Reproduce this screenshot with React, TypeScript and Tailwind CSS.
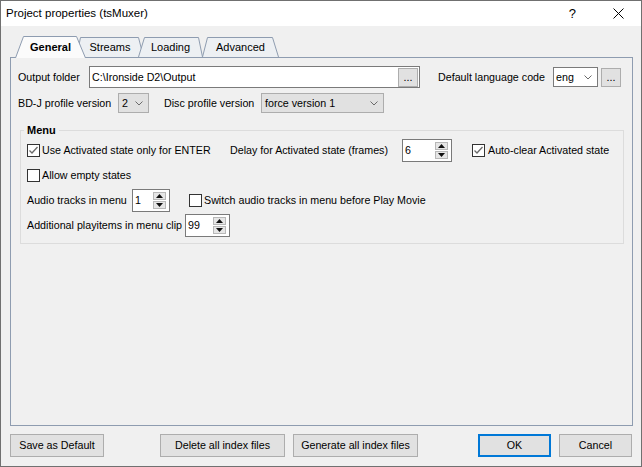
import React from "react";

const F = { fontFamily: '"Liberation Sans", Arial, sans-serif' };

function Chevron() {
  return (
    <svg width="8" height="5" viewBox="0 0 8 5" className="shrink-0">
      <path d="M0.5 0.5 L4 4 L7.5 0.5" fill="none" stroke="#6b6b6b" strokeWidth="1" />
    </svg>
  );
}

function Check({ checked }: { checked?: boolean }) {
  return (
    <div className="w-[13px] h-[13px] border border-[#333333] bg-white shrink-0 flex items-center justify-center">
      {checked && (
        <svg width="11" height="11" viewBox="0 0 11 11">
          <path d="M1.5 5.5 L4 8 L9.5 2" fill="none" stroke="#6a6a6a" strokeWidth="1.3" />
        </svg>
      )}
    </div>
  );
}

function Spin({ value, w }: { value: string; w: string }) {
  return (
    <div className={`${w} h-[23px] border border-[#7a7a7a] bg-white flex items-center shrink-0`}>
      <span className="flex-1 pl-[2px] leading-none">{value}</span>
      <div className="flex flex-col gap-[1px] mr-[3px]">
        <div className="w-[13px] h-[8px] bg-[#e6e6e6] border border-[#b8b8b8] flex items-center justify-center">
          <svg width="7" height="4" viewBox="0 0 7 4"><path d="M0 4 L3.5 0 L7 4 Z" fill="#111" /></svg>
        </div>
        <div className="w-[13px] h-[8px] bg-[#e6e6e6] border border-[#b8b8b8] flex items-center justify-center">
          <svg width="7" height="4" viewBox="0 0 7 4"><path d="M0 0 L7 0 L3.5 4 Z" fill="#111" /></svg>
        </div>
      </div>
    </div>
  );
}

function Btn({ children, w, ml, primary }: { children: React.ReactNode; w: string; ml: string; primary?: boolean }) {
  return (
    <div
      className={`${w} ${ml} h-[23px] bg-[#e1e1e1] flex items-center justify-center shrink-0 ${
        primary ? "border-2 border-[#0078d7]" : "border border-[#adadad]"
      }`}
    >
      {children}
    </div>
  );
}

function Dots({ ml }: { ml?: string }) {
  return (
    <div className={`w-[20px] h-[19px] ${ml ?? ""} bg-[#e1e1e1] border border-[#adadad] flex items-end justify-center pb-[3px] shrink-0 leading-none`}>
      ...
    </div>
  );
}

function Tab({
  label,
  w,
  ml,
  selected,
  pts,
}: {
  label: string;
  w: number;
  ml: string;
  selected?: boolean;
  pts: string;
}) {
  return (
    <div className={`relative h-[22px] ${ml} ${selected ? "z-20" : "z-10"}`} style={{ width: w }}>
      <svg className="absolute inset-0" width={w} height={22} viewBox={`0 0 ${w} 22`}>
        <path
          d={pts}
          fill={selected ? "#fbfbfb" : "#edf0f3"}
          stroke="#8e9cb0"
          strokeWidth="1"
        />
      </svg>
      <div className={`relative h-full flex items-center justify-center pt-[1px] ${selected ? "font-bold" : ""}`}>
        {label}
      </div>
    </div>
  );
}

export default function App() {
  return (
    <div style={F} className="w-[642px] h-[467px] border border-[#707070] bg-[#f0f0f0] text-[10.7px] text-black flex flex-col overflow-hidden whitespace-nowrap">
      {/* Title bar */}
      <div className="h-[25px] bg-white flex items-center shrink-0">
        <span className="ml-[5px] text-[11.5px]">Project properties (tsMuxer)</span>
        <span className="ml-auto text-[13px] mr-[37px]">?</span>
        <svg width="11" height="11" viewBox="0 0 11 11" className="mr-[17px]">
          <path d="M0.5 0.5 L10.5 10.5 M10.5 0.5 L0.5 10.5" stroke="#000" strokeWidth="1" />
        </svg>
      </div>

      {/* Tabs */}
      <div className="flex mt-[10px] ml-[14px] relative text-[11px]">
        <Tab label="General" w={71} ml="" selected pts="M0.5 22 L8.5 0.5 L61.5 0.5 L70.5 22" />
        <Tab label="Streams" w={68} ml="-ml-[10px]" pts="M0.5 21 L4.5 1.5 L62.5 1.5 L67.5 21" />
        <Tab label="Loading" w={65} ml="-ml-[6px]" pts="M0.5 21 L6.5 1.5 L60.5 1.5 L64.5 21" />
        <Tab label="Advanced" w={77} ml="-ml-[1px]" pts="M0.5 21 L5.5 1.5 L70.5 1.5 L76.5 21" />
      </div>

      {/* Pane */}
      <div className="-mt-px ml-[9px] w-[623px] h-[369px] border border-[#8e9cb0] bg-[#f0f0f0] pt-[8px] pl-[7px] shrink-0 relative z-0">
        {/* Row 1 */}
        <div className="flex items-center h-[22px]">
          <span className="w-[71px] shrink-0">Output folder</span>
          <div className="w-[331px] h-[22px] border border-[#7a7a7a] bg-white flex items-center shrink-0">
            <span className="flex-1 pl-[2px]">C:\Ironside D2\Output</span>
            <Dots ml="mr-[1px]" />
          </div>
          <span className="ml-[18px] w-[115px] shrink-0">Default language code</span>
          <div className="w-[45px] h-[20px] border border-[#7a7a7a] bg-white flex items-center pl-[2px] pr-[5px] shrink-0">
            <span className="flex-1">eng</span>
            <Chevron />
          </div>
          <Dots ml="ml-[3px]" />
        </div>

        {/* Row 2 */}
        <div className="flex items-center h-[20px] mt-[5px]">
          <span className="w-[100px] shrink-0">BD-J profile version</span>
          <div className="w-[31px] h-[20px] border border-[#adadad] bg-[#e1e1e1] flex items-center pl-[3px] pr-[5px] shrink-0">
            <span className="flex-1">2</span>
            <Chevron />
          </div>
          <span className="ml-[15px] w-[97px] shrink-0">Disc profile version</span>
          <div className="w-[123px] h-[20px] border border-[#adadad] bg-[#e1e1e1] flex items-center pl-[3px] pr-[5px] shrink-0">
            <span className="flex-1">force version 1</span>
            <Chevron />
          </div>
        </div>

        {/* Group box */}
        <div className="relative mt-[17px] ml-[2px] w-[604px] h-[114px] border border-[#dcdcdc] pt-[7px] pl-[6px]">
          <span className="absolute -top-[8px] left-[3px] px-[3px] bg-[#f0f0f0] font-bold leading-[14px] text-[11px]">Menu</span>

          <div className="flex items-center h-[25px]">
            <div className="w-[203px] flex items-center shrink-0">
              <Check checked />
              <span className="ml-[2px]">Use Activated state only for ENTER</span>
            </div>
            <span className="w-[172px] shrink-0">Delay for Activated state (frames)</span>
            <Spin value="6" w="w-[50px]" />
            <div className="ml-[20px] flex items-center">
              <Check checked />
              <span className="ml-[3px]">Auto-clear Activated state</span>
            </div>
          </div>

          <div className="flex items-center h-[25px]">
            <Check />
            <span className="ml-[2px]">Allow empty states</span>
          </div>

          <div className="flex items-center h-[25px]">
            <span className="w-[105px] shrink-0">Audio tracks in menu</span>
            <Spin value="1" w="w-[38px]" />
            <div className="ml-[19px] flex items-center">
              <Check />
              <span className="ml-[2px]">Switch audio tracks in menu before Play Movie</span>
            </div>
          </div>

          <div className="flex items-center h-[25px]">
            <span className="w-[158px] shrink-0">Additional playitems in menu clip</span>
            <Spin value="99" w="w-[45px]" />
          </div>
        </div>
      </div>

      {/* Bottom buttons */}
      <div className="flex items-center mt-[8px]">
        <Btn w="w-[94px]" ml="ml-[9px]">Save as Default</Btn>
        <Btn w="w-[125px]" ml="ml-[56px]">Delete all index files</Btn>
        <Btn w="w-[125px]" ml="ml-[8px]">Generate all index files</Btn>
        <Btn w="w-[73px]" ml="ml-[60px]" primary>OK</Btn>
        <Btn w="w-[73px]" ml="ml-[8px]">Cancel</Btn>
      </div>
    </div>
  );
}
